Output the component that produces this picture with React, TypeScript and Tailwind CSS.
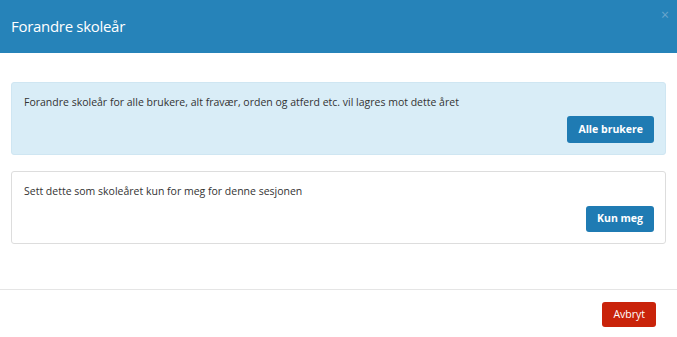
import React from 'react';

export default function App() {
  return (
    <div className="w-[677px] h-[337px] bg-white font-['Open_Sans',sans-serif] text-[#333]">
      <div className="h-[53px] bg-[#2683b9] flex items-center pl-[11px] relative">
        <h4 className="text-white text-[15px] leading-none tracking-[-0.3px]">Forandre skoleår</h4>
        <button className="absolute right-[8px] top-[8px] text-[#6aa6cd] text-[14px] leading-none">×</button>
      </div>

      <div className="px-[11px] pt-[29px] pb-[45px] flex flex-col gap-[16px] border-b border-[#e5e5e5]">
        <div className="h-[73px] bg-[#d9edf7] border border-[#cfe6f2] rounded-[3px] pl-[12px] pr-[11px] pt-[11px] pb-[11px] flex flex-col">
          <p className="text-[10.5px] leading-[16px]">
            Forandre skoleår for alle brukere, alt fravær, orden og atferd etc. vil lagres mot dette året
          </p>
          <div className="flex justify-end mt-auto">
            <button className="h-[27px] px-[11px] bg-[#1f7bb3] text-white text-[10.5px] font-bold rounded-[3px]">
              Alle brukere
            </button>
          </div>
        </div>

        <div className="h-[73px] bg-white border border-[#dddddd] rounded-[3px] pl-[12px] pr-[11px] pt-[11px] pb-[11px] flex flex-col">
          <p className="text-[10.5px] leading-[16px]">Sett dette som skoleåret kun for meg for denne sesjonen</p>
          <div className="flex justify-end mt-auto">
            <button className="h-[26px] px-[11px] bg-[#1f7bb3] text-white text-[10.5px] font-bold rounded-[3px]">
              Kun meg
            </button>
          </div>
        </div>
      </div>

      <div className="flex justify-end pr-[21px] pt-[12px]">
        <button className="h-[25px] px-[11px] bg-[#c9230a] text-white text-[10.5px] rounded-[3px]">Avbryt</button>
      </div>
    </div>
  );
}
